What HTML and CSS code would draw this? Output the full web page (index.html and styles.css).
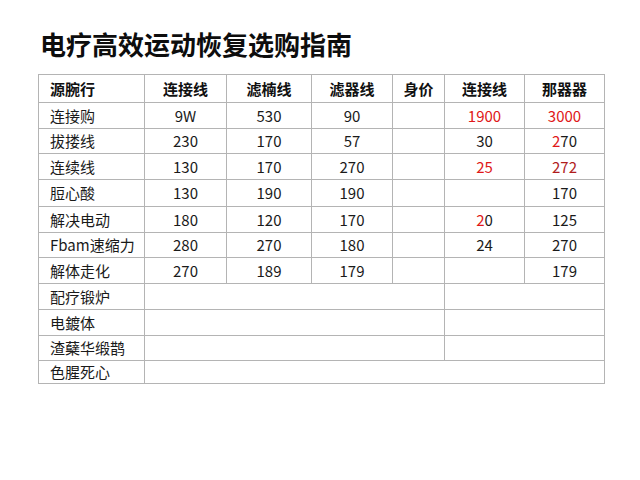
FILE: index.html
```html
<!DOCTYPE html>
<html lang="zh">
<head>
<meta charset="utf-8">
<title>电疗高效运动恢复选购指南</title>
<link rel="stylesheet" href="styles.css">
</head>
<body>
<div class="page">
  <h1 class="title">电疗高效运动恢复选购指南</h1>
  <table class="grid">
    <colgroup>
      <col class="c1"><col class="c2"><col class="c3"><col class="c4"><col class="c5"><col class="c6"><col class="c7">
    </colgroup>
    <thead>
      <tr class="head">
        <th class="lbl">源腕行</th><th>连接线</th><th>滤楠线</th><th>滤器线</th><th>身价</th><th>连接线</th><th>那器器</th>
      </tr>
    </thead>
    <tbody>
      <tr><td class="lbl">连接购</td><td>9W</td><td>530</td><td>90</td><td></td><td class="red">1900</td><td class="red">3000</td></tr>
      <tr class="r25"><td class="lbl">拔搂线</td><td>230</td><td>170</td><td>57</td><td></td><td>30</td><td><span class="red">2</span>70</td></tr>
      <tr><td class="lbl">连续线</td><td>130</td><td>170</td><td>270</td><td></td><td class="red">25</td><td class="dred">272</td></tr>
      <tr class="r27"><td class="lbl">脰心酸</td><td>130</td><td>190</td><td>190</td><td></td><td></td><td>170</td></tr>
      <tr><td class="lbl">解决电动</td><td>180</td><td>120</td><td>170</td><td></td><td><span class="red">2</span>0</td><td>125</td></tr>
      <tr class="r25"><td class="lbl">Fbam速缩力</td><td>280</td><td>270</td><td>180</td><td></td><td>24</td><td>270</td></tr>
      <tr><td class="lbl">解体走化</td><td>270</td><td>189</td><td>179</td><td></td><td></td><td>179</td></tr>
      <tr><td class="lbl">配疗锻炉</td><td colspan="4"></td><td colspan="2"></td></tr>
      <tr><td class="lbl">电鍍体</td><td colspan="4"></td><td colspan="2"></td></tr>
      <tr class="r25"><td class="lbl">渣蘖华缎鹊</td><td colspan="4"></td><td colspan="2"></td></tr>
      <tr class="last"><td class="lbl">色腥死心</td><td colspan="6"></td></tr>
    </tbody>
  </table>
</div>
</body>
</html>
```

FILE: styles.css
```css
html, body {
  margin: 0;
  padding: 0;
  background: #ffffff;
}
.page {
  padding: 29px 0 0 38px;
  font-family: "Noto Sans CJK SC", "Noto Sans", sans-serif;
  color: #111111;
}
.title {
  margin: 0 0 15px 2px;
  font-size: 26px;
  line-height: 30px;
  font-weight: 700;
  color: #0d0d0d;
}
.grid {
  border-collapse: collapse;
  table-layout: fixed;
  width: 566px;
  border: 1px solid #a8a8a8;
}
.c1 { width: 106px; }
.c2 { width: 82px; }
.c3 { width: 85px; }
.c4 { width: 81px; }
.c5 { width: 52px; }
.c6 { width: 80px; }
.c7 { width: 80px; }
.grid th, .grid td {
  border: 1px solid #b4b4b4;
  padding: 0;
  text-align: center;
  font-size: 15px;
  line-height: 18px;
  font-weight: 400;
  color: #1a1a1a;
  overflow: hidden;
  white-space: nowrap;
}
.grid tr { height: 26px; }
.grid tr.r25 { height: 25px; }
.grid tr.r27 { height: 27px; }
.grid tr.head { height: 28px; }
.grid tr.last { height: 23px; }
.grid th {
  font-size: 15px;
  font-weight: 700;
  color: #111111;
}
.grid .lbl {
  text-align: left;
  padding-left: 11px;
}
.red { color: #e01818; }
.grid td.red { color: #e01818; }
.grid td.dred { color: #b01c1c; }
```
